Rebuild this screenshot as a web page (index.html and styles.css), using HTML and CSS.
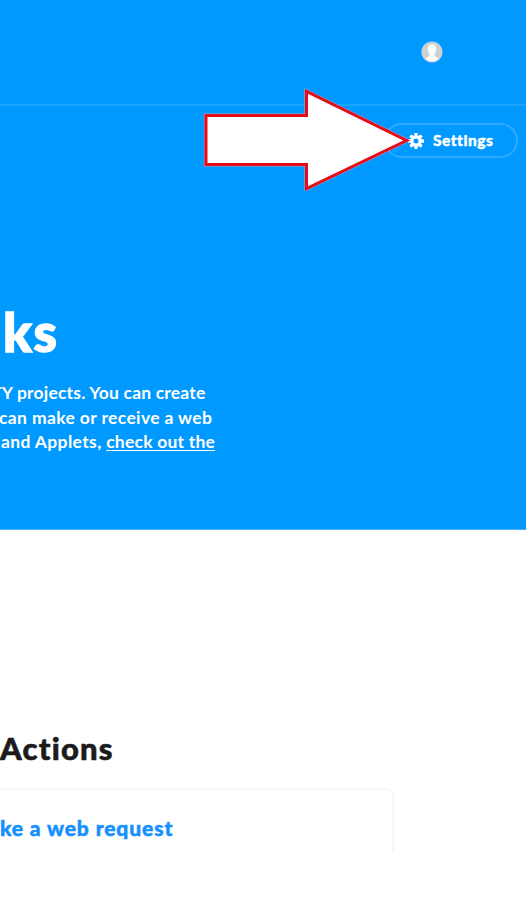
FILE: index.html
```html
<!DOCTYPE html>
<html lang="en">
<head>
<meta charset="utf-8">
<title>Webhooks</title>
<link rel="stylesheet" href="styles.css">
</head>
<body>
<section class="hero">
  <header class="topbar">
    <svg class="avatar" viewBox="0 0 22 22"><circle cx="11" cy="11" r="10.6" fill="#ccd0d3"/><path d="M11 3.500c-3 0-4.400 2-4.200 4.800.1 2 .8 3.600 1.900 4.700v1.600c0 1-2.700 1.300-4.200 2.600 1.600 2 3.800 3.200 6.500 3.200s4.900-1.200 6.500-3.200c-1.500-1.300-4.200-1.600-4.200-2.600V13c1.100-1.100 1.800-2.700 1.900-4.700.2-2.800-1.200-4.800-4.200-4.800z" fill="#fff"/></svg>
  </header>
  <div class="toolbar">
    <a class="settings">
      <svg class="gear" viewBox="0 0 16 16"><g fill="#fff"><g id="teeth"><rect x="6.300" y="0" width="3.400" height="16" rx=".8"/><rect x="0" y="6.300" width="16" height="3.400" rx=".8"/></g><use href="#teeth" transform="rotate(45 8 8)"/><circle cx="8" cy="8" r="5.700"/></g><circle cx="8" cy="8" r="2.500" fill="#09f"/></svg>
      <span>Settings</span>
    </a>
  </div>
  <h1>ks</h1>
  <div class="intro">
    <p class="line one">TY projects. You can create</p>
    <p class="line two">can make or receive a web</p>
    <p class="line three">and Applets, <a>check out the</a></p>
  </div>
  <svg class="arrow" viewBox="0 0 210 106"><path d="M5 30.500H105.500V6.500L205.500 55.500L105.500 103.500V79.500H5Z" fill="#fff" stroke="#f3a0b4" stroke-opacity=".55" stroke-width="4.500"/><path d="M5 30.500H105.500V6.500L205.500 55.500L105.500 103.500V79.500H5Z" fill="#fff" stroke="#e60c18" stroke-width="3"/></svg>
</section>
<main>
  <h2>Actions</h2>
  <div class="card"><h3>ke a web request</h3></div>
</main>
</body>
</html>
```
FILE: styles.css
```css
* { box-sizing: border-box; }
body { margin: 0; height: 900px; overflow: hidden; background: #fff; font-family: Lato, "Open Sans", sans-serif; font-variant-ligatures: none; }
h1, h2, h3, p { margin: 0; white-space: nowrap; }
.hero { position: relative; height: 530px; background: #09f; color: #fff; border-bottom: 1px solid #4eb2f5; overflow: hidden; }
.topbar { height: 106px; display: flex; justify-content: flex-end; padding: 41px 83px 0 0; border-bottom: 2px solid #1aa3ff; }
.avatar { width: 22px; height: 22px; }
.toolbar { display: flex; justify-content: flex-end; padding: 17px 8px 0 0; }
.settings { width: 134px; height: 35px; border: 2px solid #2eabff; border-radius: 18px; display: flex; align-items: center; gap: 9px; padding-left: 22px; font-size: 15.500px; font-weight: 900; letter-spacing: .5px; -webkit-text-stroke: .4px #fff; }
.settings span { position: relative; top: -1px; }
.gear { width: 16px; height: 16px; }
h1 { margin: 142px 0 0 3px; font-size: 53px; line-height: 64px; font-weight: 900; letter-spacing: 1.500px; -webkit-text-stroke: 1.500px #fff; }
.intro { margin-top: 17px; font-size: 17.500px; line-height: 24.500px; font-weight: 700; }
.one { margin-left: -9px; letter-spacing: .19px; }
.two { margin-left: -1px; letter-spacing: .37px; }
.three { margin-left: 1px; letter-spacing: .36px; }
.three a { letter-spacing: .22px; }
.intro a { text-decoration: underline; text-decoration-thickness: 1px; text-underline-offset: 2px; text-decoration-skip-ink: none; }
.arrow { position: absolute; left: 201px; top: 85px; width: 210px; height: 106px; }
main { padding-top: 197px; }
h2 { color: #1b1b1b; font-size: 31px; line-height: 42px; font-weight: 900; letter-spacing: 1.200px; -webkit-text-stroke: .6px #1b1b1b; }
.card { width: 394px; height: 65px; margin-top: 19px; border: 2px solid #f7f7f7; border-width: 2px 2px 0 0; border-radius: 0 7px 0 0; padding-top: 23px; }
h3 { color: #1790ff; font-size: 21px; line-height: 30px; font-weight: 900; letter-spacing: .9px; -webkit-text-stroke: .5px #1790ff; }
```
